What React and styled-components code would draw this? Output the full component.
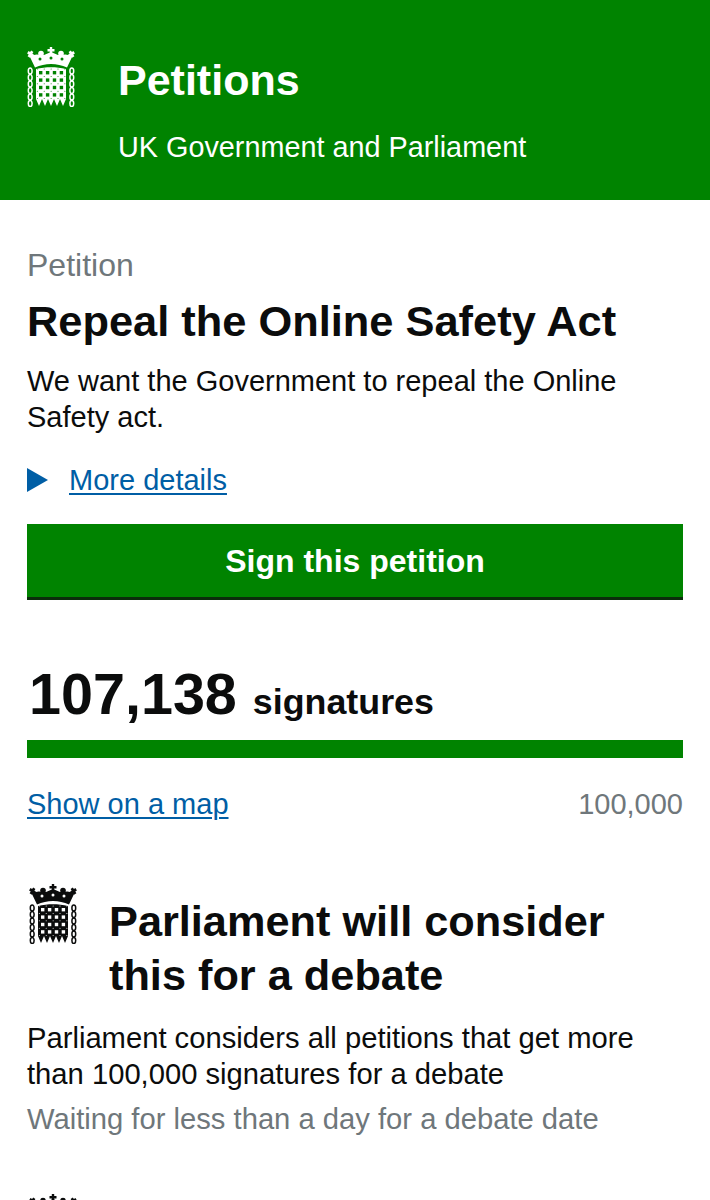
import styled, { createGlobalStyle } from 'styled-components';

const GlobalStyle = createGlobalStyle`
  html, body {
    margin: 0;
    height: 1200px;
    overflow: hidden;
    background: #ffffff;
    font-family: "Liberation Sans", Arial, sans-serif;
    color: #0b0c0c;
  }
`;

const Header = styled.header`
  height: 200px;
  box-sizing: border-box;
  background: #008300;
  color: #ffffff;
  display: flex;
  gap: 43px;
  padding: 47px 0 0 27px;
`;

const HeaderTitle = styled.div`
  font-size: 43px;
  line-height: 48px;
  font-weight: 700;
  margin-top: 9px;
`;

const HeaderSub = styled.div`
  font-size: 28.800px;
  line-height: 34px;
  margin-top: 26px;
`;

const Main = styled.main`
  padding: 47px 27px 0;
`;

const Caption = styled.div`
  font-size: 32px;
  line-height: 36px;
  color: #6f777b;
`;

const Title = styled.h1`
  margin: 13px 0 0;
  font-size: 43.400px;
  line-height: 50px;
  font-weight: 700;
`;

const Body = styled.p`
  margin: ${(p) => p.$top || 0}px 0 0;
  font-size: 29px;
  line-height: 36px;
`;

const DebateText = styled(Body)`
  font-size: 29.200px;
`;

const Muted = styled(DebateText)`
  color: #6f777b;
`;

const Details = styled.div`
  display: flex;
  align-items: center;
  gap: 21px;
  margin-top: 27px;
`;

const Arrow = styled.span`
  width: 0;
  height: 0;
  border-style: solid;
  border-width: 12px 0 12px 21px;
  border-color: transparent transparent transparent #005ea5;
`;

const Link = styled.a`
  font-size: 29px;
  line-height: 36px;
  color: #005ea5;
  text-decoration: underline;
  text-underline-offset: 3px;
  text-decoration-thickness: 2px;
`;

const SignButton = styled.button`
  display: block;
  width: 100%;
  height: 76px;
  margin-top: 26px;
  border: none;
  border-bottom: 3px solid #0b2d0b;
  background: #008300;
  color: #ffffff;
  font-family: inherit;
  font-size: 32px;
  font-weight: 700;
  padding: 2px 0 0;
`;

const Count = styled.div`
  display: flex;
  align-items: baseline;
  gap: 16px;
  margin-top: 59px;
  padding-left: 2px;
`;

const CountNumber = styled.span`
  font-size: 57.500px;
  line-height: 70px;
  font-weight: 700;
`;

const CountLabel = styled.span`
  font-size: 35.800px;
  font-weight: 700;
`;

const Bar = styled.div`
  height: 18px;
  margin-top: 11px;
  background: #008300;
`;

const BarFoot = styled.div`
  display: flex;
  justify-content: space-between;
  margin-top: 28px;
`;

const Goal = styled.span`
  font-size: 29px;
  line-height: 36px;
  color: #6f777b;
`;

const Milestone = styled.section`
  display: flex;
  gap: 32px;
  margin-top: 62px;
  padding-left: 2px;
`;

const MilestoneTitle = styled.h2`
  margin: 10px 0 0;
  font-size: 43.300px;
  line-height: 54px;
  font-weight: 700;
  max-width: 540px;
`;

const NextMilestone = styled.section`
  margin-top: 57px;
  padding-left: 2px;
`;

const CrestSvg = styled.svg`
  flex: none;
  display: block;
`;

// portcullis badge, drawn on a 48x60 grid
function Crest({ color, bg }) {
  const squares = [];
  const dots = [];
  for (let r = 0; r < 4; r++) {
    for (let c = 0; c < 4; c++) {
      squares.push(<rect key={`${r}-${c}`} x={12 + c * 6.900} y={24 + r * 7.400} width="3.400" height="3.400" fill={bg} />);
    }
  }
  for (let r = 0; r < 5; r++) {
    for (let c = 0; c < 5; c++) {
      dots.push(<circle key={`d${r}-${c}`} cx={10.300 + c * 6.900} cy={22 + r * 7.400} r="0.500" fill={bg} />);
    }
  }
  const links = [];
  for (let i = 0; i < 6; i++) {
    links.push(<ellipse key={`l${i}`} cx="3.200" cy={24 + i * 6.500} rx="1.900" ry="3" />);
    links.push(<ellipse key={`r${i}`} cx="44.800" cy={24 + i * 6.500} rx="1.900" ry="3" />);
  }
  return (
    <CrestSvg width="48" height="60" viewBox="0 0 48 60">
      {/* crown */}
      <g fill={color}>
        <path d="M22.800 0h2.400v2h2.300v2.600h-2.300V7h-2.400V4.600h-2.300V2h2.300z" />
        <circle cx="14" cy="6.500" r="2.800" />
        <circle cx="34" cy="6.500" r="2.800" />
        <path d="M4.200 3.500l2.200 1.600-1 1.600 2 1.200-1.400 2.300-2-1.200-1.100 1.800L.6 9.200l1.100-1.800-1.600-1 1.400-2.300 1.600 1z" />
        <path d="M43.800 3.500l-2.200 1.600 1 1.600-2 1.200 1.400 2.300 2-1.200 1.100 1.800 2.300-1.600-1.100-1.800 1.600-1-1.400-2.300-1.600 1z" />
        <path d="M2.500 9l7 -1.500L17 8l7-3 7 3 7.500-.5 7 1.500L40 20.500C30 15.800 18 15.800 8 20.500z" />
      </g>
      <circle cx="13" cy="12" r="1.500" fill={bg} />
      <circle cx="24" cy="11" r="1.500" fill={bg} />
      <circle cx="35" cy="12" r="1.500" fill={bg} />
      {/* gate */}
      <path
        fill={color}
        d="M9 22c10-2.300 20-2.300 30 0v30l-3 7-3-7-3 7-3-7-3 7-3-7-3 7-3-7-3 7-3-7z"
      />
      {squares}
      {dots}
      <g fill="none" stroke={color} strokeWidth="1.500">
        {links}
      </g>
    </CrestSvg>
  );
}

export default function App() {
  return (
    <>
      <GlobalStyle />
      <Header>
        <Crest color="#ffffff" bg="#008300" />
        <div>
          <HeaderTitle>Petitions</HeaderTitle>
          <HeaderSub>UK Government and Parliament</HeaderSub>
        </div>
      </Header>
      <Main>
        <Caption>Petition</Caption>
        <Title>Repeal the Online Safety Act</Title>
        <Body $top={17}>We want the Government to repeal the Online Safety act.</Body>
        <Details>
          <Arrow />
          <Link href="#">More details</Link>
        </Details>
        <SignButton>Sign this petition</SignButton>
        <Count>
          <CountNumber>107,138</CountNumber>
          <CountLabel>signatures</CountLabel>
        </Count>
        <Bar />
        <BarFoot>
          <Link href="#">Show on a map</Link>
          <Goal>100,000</Goal>
        </BarFoot>
        <Milestone>
          <Crest color="#0b0c0c" bg="#ffffff" />
          <MilestoneTitle>Parliament will consider this for a debate</MilestoneTitle>
        </Milestone>
        <DebateText $top={18}>Parliament considers all petitions that get more than 100,000 signatures for a debate</DebateText>
        <Muted $top={9}>Waiting for less than a day for a debate date</Muted>
        <NextMilestone>
          <Crest color="#0b0c0c" bg="#ffffff" />
        </NextMilestone>
      </Main>
    </>
  );
}
